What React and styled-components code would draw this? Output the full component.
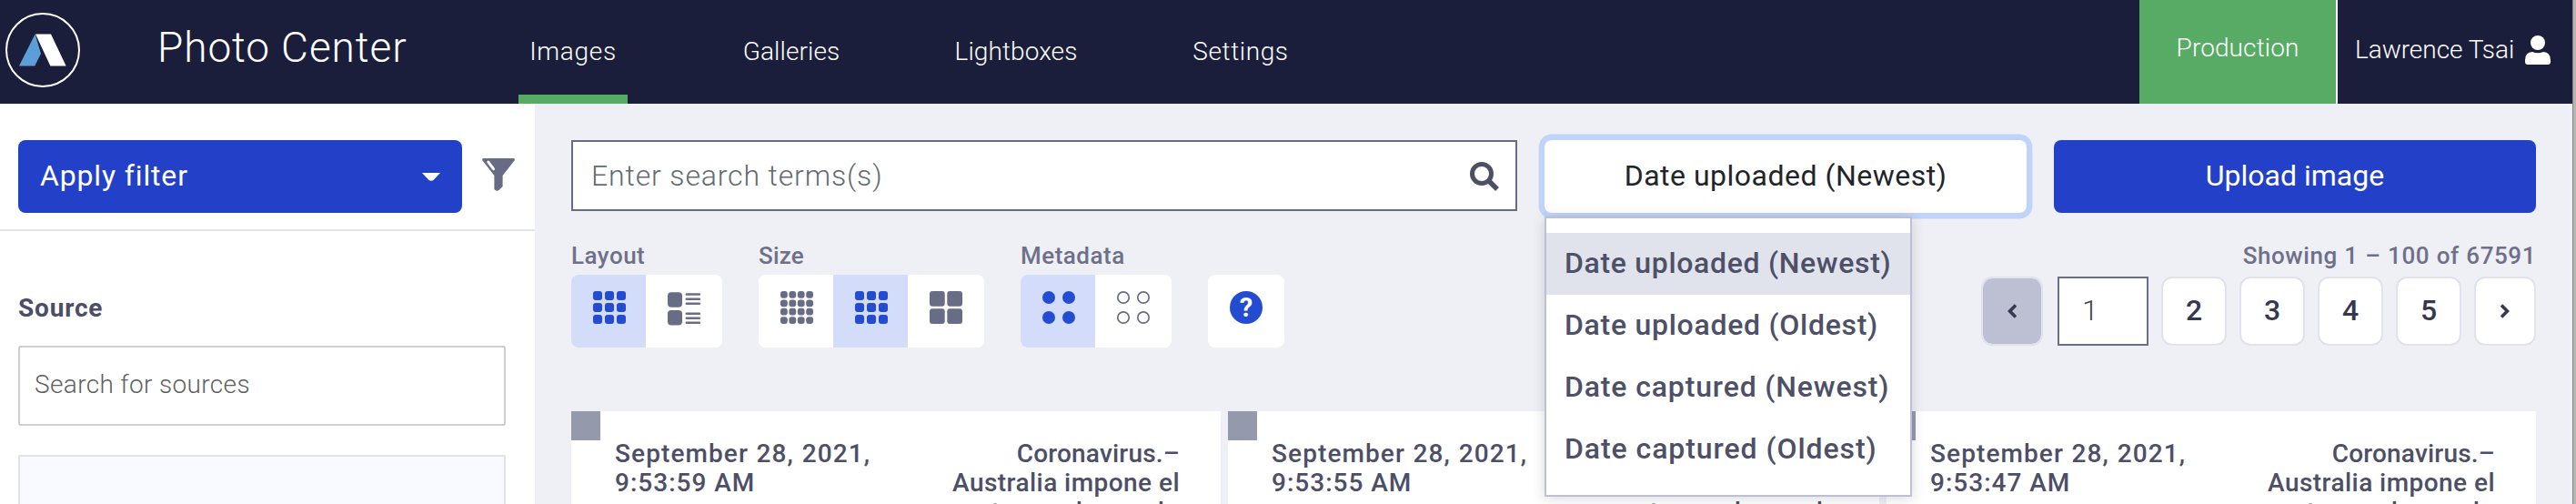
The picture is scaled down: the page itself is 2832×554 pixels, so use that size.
import React from "react";
import styled, { createGlobalStyle, css } from "styled-components";

const GlobalStyle = createGlobalStyle`
  *, *::before, *::after { box-sizing: border-box; }
  body { margin: 0; overflow: hidden; }
`;

const Page = styled.div`
  display: flex;
  width: 2832px;
  height: 554px;
  overflow: hidden;
  font-family: Roboto, "Liberation Sans", sans-serif;
  background: #eff0f5;
`;

const WindowEdge = styled.div`
  width: 4px;
  background: #b5b5b2;
  border-left: 1px solid #858585;
`;

const Shell = styled.div`
  width: 2828px;
  height: 554px;
  display: flex;
  flex-direction: column;
`;

const Spaced = styled.span`
  white-space: nowrap;
  letter-spacing: ${(p) => p.$ls || 0}px;
  word-spacing: ${(p) => p.$ws || 0}px;
`;

/* Header */
const Header = styled.header`
  flex: none;
  height: 114px;
  display: flex;
  background: #1b1e3b;
  color: #fff;
  font-size: 28px;
  font-weight: 300;
`;

const Logo = styled.svg`
  width: 82px;
  height: 82px;
  margin: 14px 0 0 6px;
`;

const Brand = styled.div`
  width: 482px;
  padding-left: 85px;
  font-size: 46px;
  font-weight: 340;
  line-height: 105px;
`;

const Nav = styled.nav`
  display: flex;
  gap: 114px;
  flex: 1;
`;

const NavItem = styled.a`
  width: ${(p) => p.$width}px;
  display: flex;
  justify-content: center;
  line-height: 114px;
  border-bottom: 10px solid ${(p) => (p.$active ? "#57ab65" : "transparent")};
`;

const Environment = styled.div`
  width: 218px;
  background: #57ab65;
  border-right: 2px solid #fff;
  text-align: center;
  line-height: 106px;
`;

const User = styled.div`
  width: 258px;
  display: flex;
  align-items: center;
  justify-content: space-between;
  padding: 0 24px 5px 19px;
`;

const UserIcon = styled.svg`
  width: 28px;
  height: 32px;
`;

/* Sidebar */
const Body = styled.div`
  display: flex;
  flex: 1;
  min-height: 0;
`;

const Sidebar = styled.aside`
  width: 588px;
  background: #fff;
  display: flex;
  flex-direction: column;
`;

const FilterBar = styled.div`
  flex: none;
  height: 140px;
  display: flex;
  padding: 40px 22px 0 20px;
  justify-content: space-between;
  border-bottom: 2px solid #e0e5ec;
`;

const buttonBase = css`
  height: 80px;
  border-radius: 8px;
  font-size: 32px;
  font-weight: 440;
  display: flex;
  align-items: center;
  padding-bottom: 2px;
`;

const ApplyFilter = styled.div`
  ${buttonBase}
  width: 488px;
  padding-left: 24px;
  padding-right: 24px;
  justify-content: space-between;
  background: #2240c8;
  color: #fff;
`;

const Caret = styled.svg`
  width: 20px;
  height: 9px;
  margin-top: 3px;
`;

const FunnelIcon = styled.svg`
  width: 36px;
  height: 36px;
  margin-top: 20px;
`;

const SourcePanel = styled.section`
  padding: 67px 32px 0 20px;
  display: flex;
  flex-direction: column;
`;

const SourceTitle = styled.div`
  font-size: 28px;
  line-height: 36px;
  font-weight: 700;
  color: #4b4e66;
`;

const SourceSearch = styled.div`
  height: 88px;
  margin-top: 23px;
  padding: 0 16px 4px;
  border: 2px solid #cfcfcf;
  border-radius: 2px;
  display: flex;
  align-items: center;
  font-size: 28px;
  font-weight: 320;
  color: #606060;
`;

const SourceList = styled.div`
  height: 120px;
  margin-top: 32px;
  border: 2px solid #e0e3ed;
  background: #f9faff;
`;

/* Main area */
const Main = styled.main`
  flex: 1;
  padding: 40px 40px 0;
  display: flex;
  flex-direction: column;
`;

const TopRow = styled.div`
  display: grid;
  grid-template-columns: 1040px 530px 530px;
  gap: 30px;
  height: 80px;
`;

const SearchField = styled.div`
  height: 78px;
  border: 2px solid #676b86;
  background: #fff;
  display: flex;
  align-items: center;
  justify-content: space-between;
  padding: 0 18px 0 20px;
  font-size: 32px;
  font-weight: 320;
  color: #626b70;
`;

const SearchIcon = styled.svg`
  width: 32px;
  height: 32px;
  margin-top: 1px;
`;

const SortWrap = styled.div`
  position: relative;
`;

const SortButton = styled.div`
  ${buttonBase}
  font-weight: 400;
  justify-content: center;
  background: #fff;
  color: #212529;
  box-shadow: 0 0 0 6.4px #bfd4f7;
`;

const SortMenu = styled.div`
  position: absolute;
  z-index: 2;
  top: 84px;
  left: 0;
  width: 404px;
  height: 308px;
  padding-top: 16px;
  border: 2px solid #bdbfd2;
  background: #fff;
  box-shadow: 0 2px 14px rgba(40, 42, 70, 0.18);
`;

const SortOption = styled.div`
  height: 68px;
  padding-left: 20px;
  line-height: 66px;
  font-size: 32px;
  font-weight: 460;
  color: #4e5068;
  background: ${(p) => (p.$selected ? "#e0e3ec" : "transparent")};
`;

const UploadButton = styled.div`
  ${buttonBase}
  justify-content: center;
  background: #2240c8;
  color: #fff;
`;

const ControlsRow = styled.div`
  display: flex;
  align-items: flex-end;
  gap: 40px;
  height: 118px;
  margin-top: 30px;
`;

const ControlGroup = styled.div`
  display: flex;
  flex-direction: column;
`;

const ControlLabel = styled.div`
  font-size: 26px;
  line-height: 34px;
  height: 38px;
  font-weight: 460;
  color: #6e708a;
`;

const Segments = styled.div`
  display: flex;
  height: 80px;
  padding-right: 2px;
  border-radius: 8px;
  overflow: hidden;
  background: #fff;
`;

const Segment = styled.div`
  width: 82px;
  height: 80px;
  padding: 18px 0 0 24px;
  background: ${(p) => (p.$on ? "#d3dcf8" : "#fff")};
  color: ${(p) => (p.$on ? "#234cd1" : "#686c85")};
`;

const Icon = styled.svg`
  display: block;
  width: 36px;
  height: 36px;
  fill: currentColor;
  overflow: visible;
`;

const HelpButton = styled.div`
  width: 84px;
  height: 80px;
  border-radius: 8px;
  background: #fff;
  padding: 18px 24px;
`;

const HelpBadge = styled.div`
  width: 36px;
  height: 36px;
  border-radius: 50%;
  background: #234cd1;
  color: #fff;
  font-size: 29px;
  font-weight: 700;
  line-height: 37px;
  text-align: center;
`;

const Paging = styled.div`
  margin-left: auto;
  height: 118px;
  display: flex;
  flex-direction: column;
  align-items: flex-end;
`;

const PageButtons = styled.div`
  display: flex;
  gap: 14px;
  margin-top: 2px;
`;

const PageButton = styled.div`
  width: ${(p) => p.$width || 72}px;
  height: 76px;
  border: 2px solid #e0e3ed;
  border-radius: 12px;
  margin-right: ${(p) => (p.$disabled ? 2 : 0)}px;
  background: ${(p) => (p.$disabled ? "#bdc0d2" : "#fff")};
  background-clip: padding-box;
  display: flex;
  align-items: center;
  justify-content: center;
  padding-bottom: 2px;
  font-size: 32px;
  font-weight: 480;
  color: #36384f;
`;

const PageInput = styled.div`
  width: 100px;
  height: 76px;
  border: 2px solid #6b6e89;
  background: #fff;
  padding-left: 25px;
  font-size: 32px;
  font-weight: 320;
  line-height: 70px;
  color: #40454b;
`;

const Chevron = styled.svg`
  width: 10px;
  height: 16px;
  margin-top: 2px;
  fill: none;
  stroke: #36384f;
  stroke-width: 3.6;
`;

const Cards = styled.div`
  display: grid;
  grid-template-columns: 714px 716px 714px;
  gap: 8px;
  margin-top: 70px;
  height: 102px;
`;

const Card = styled.article`
  background: #fff;
  display: flex;
  height: 102px;
  overflow: hidden;
`;

const CardCheck = styled.div`
  width: 32px;
  height: 32px;
  background: #9599ac;
`;

const CardText = styled.div`
  flex: 1;
  display: flex;
  justify-content: space-between;
  padding: 31px 45px 0 16px;
  font-size: 28px;
  line-height: 32px;
  font-weight: 460;
  color: #4d4f67;
`;

const Column = styled.div`
  display: flex;
  flex-direction: column;
  align-items: ${(p) => (p.$end ? "flex-end" : "flex-start")};
`;

const GridIcon = ({ n, size, gap, r }) => {
  const cells = [];
  for (let y = 0; y < n; y++)
    for (let x = 0; x < n; x++)
      cells.push(
        <rect key={`${x}-${y}`} x={x * (size + gap)} y={y * (size + gap)} width={size} height={size} rx={r} />
      );
  return <Icon viewBox="0 0 36 36">{cells}</Icon>;
};

const ListIcon = () => (
  <Icon viewBox="0 0 36 36">
    <rect x="0" y="1.3" width="16" height="16.4" rx="4" />
    <rect x="0" y="21" width="16" height="16.4" rx="4" />
    {[2.2, 7.4, 12.4, 23.4, 28.4, 33.4].map((y) => (
      <rect key={y} x="19.6" y={y} width="16.4" height="2.6" rx="1" />
    ))}
  </Icon>
);

const DotsIcon = ({ outline }) => (
  <Icon viewBox="0 0 36 36">
    {[[7, 7], [29, 7], [7, 29], [29, 29]].map(([x, y]) =>
      outline ? (
        <circle key={`${x}${y}`} cx={x} cy={y} r="6.2" fill="none" stroke="currentColor" strokeWidth="1.7" />
      ) : (
        <circle key={`${x}${y}`} cx={x} cy={y} r="7" />
      )
    )}
  </Icon>
);

const times = ["9:53:59 AM", "9:53:55 AM", "9:53:47 AM"];

const sortOptions = [
  ["Date uploaded (Newest)", 0.68],
  ["Date uploaded (Oldest)", 0.72],
  ["Date captured (Newest)", 0.85],
  ["Date captured (Oldest)", 0.93],
];

export default function App() {
  return (
    <Page>
      <GlobalStyle />
      <Shell>
        <Header>
          <Logo viewBox="0 0 82 82">
            <circle cx="41" cy="41" r="40" fill="none" stroke="#fff" strokeWidth="2" />
            <path d="M32.6 23.5L39 45L32.2 58.5H15z" fill="#5c9fd8" />
            <path d="M33 23.5H50L66.6 58.5H49.4z" fill="#fff" />
          </Logo>
          <Brand><Spaced $ls={0.9}>Photo Center</Spaced></Brand>
          <Nav>
            <NavItem $active $width={120}><Spaced $ls={0.7}>Images</Spaced></NavItem>
            <NavItem $width={132}><Spaced $ls={0.1}>Galleries</Spaced></NavItem>
            <NavItem $width={134}><Spaced $ls={0.1}>Lightboxes</Spaced></NavItem>
            <NavItem $width={132}><Spaced $ls={0.6}>Settings</Spaced></NavItem>
          </Nav>
          <Environment><Spaced $ls={0.1}>Production</Spaced></Environment>
          <User>
            <Spaced $ls={-0.05}>Lawrence Tsai</Spaced>
            <UserIcon viewBox="0 0 28 32" fill="#fff">
              <circle cx="14" cy="8" r="8" />
              <path d="M8 18Q14 20.5 20 18Q28 18.500 28 27V29Q28 32 25 32H3Q0 32 0 29V27Q0 18.500 8 18Z" />
            </UserIcon>
          </User>
        </Header>
        <Body>
          <Sidebar>
            <FilterBar>
              <ApplyFilter>
                <Spaced $ls={0.85}>Apply filter</Spaced>
                <Caret viewBox="0 0 20 9"><path d="M0 0H20L12.500 8Q10 9.500 7.500 8Z" fill="#fff" /></Caret>
              </ApplyFilter>
              <FunnelIcon viewBox="0 0 36 36">
                <path d="M1 0H35Q36.500 1 35.500 2.500L22.600 19V31L18.500 35Q16 37 13.400 34V19L.5 2.500Q-.5 1 1 0Z" fill="#676b86" />
                <path d="M6.800 4.200L12.500 11.700" stroke="#fff" strokeWidth="3" strokeLinecap="round" />
              </FunnelIcon>
            </FilterBar>
            <SourcePanel>
              <SourceTitle><Spaced $ls={0.8}>Source</Spaced></SourceTitle>
              <SourceSearch><Spaced $ls={0.35}>Search for sources</Spaced></SourceSearch>
              <SourceList />
            </SourcePanel>
          </Sidebar>
          <Main>
            <TopRow>
              <SearchField>
                <Spaced $ls={0.85}>Enter search terms(s)</Spaced>
                <SearchIcon viewBox="0 0 32 32" fill="none" stroke="#4d4f67">
                  <circle cx="13" cy="13" r="10.500" strokeWidth="5" />
                  <path d="M21 21L30 30" strokeWidth="5.500" />
                </SearchIcon>
              </SearchField>
              <SortWrap>
                <SortButton><Spaced $ls={0.5}>Date uploaded (Newest)</Spaced></SortButton>
                <SortMenu>
                  {sortOptions.map(([label, ls], i) => (
                    <SortOption key={label} $selected={i === 0}><Spaced $ls={ls}>{label}</Spaced></SortOption>
                  ))}
                </SortMenu>
              </SortWrap>
              <UploadButton><Spaced $ls={0}>Upload image</Spaced></UploadButton>
            </TopRow>
            <ControlsRow>
              <ControlGroup>
                <ControlLabel><Spaced $ls={0.5}>Layout</Spaced></ControlLabel>
                <Segments>
                  <Segment $on><GridIcon n={3} size={10} gap={3} r={3} /></Segment>
                  <Segment><ListIcon /></Segment>
                </Segments>
              </ControlGroup>
              <ControlGroup>
                <ControlLabel><Spaced $ls={0.2}>Size</Spaced></ControlLabel>
                <Segments>
                  <Segment><GridIcon n={4} size={7.8} gap={1.6} r={3} /></Segment>
                  <Segment $on><GridIcon n={3} size={10} gap={3} r={3} /></Segment>
                  <Segment><GridIcon n={2} size={16.7} gap={2.6} r={3} /></Segment>
                </Segments>
              </ControlGroup>
              <ControlGroup>
                <ControlLabel><Spaced $ls={0.5}>Metadata</Spaced></ControlLabel>
                <Segments>
                  <Segment $on><DotsIcon /></Segment>
                  <Segment><DotsIcon outline /></Segment>
                </Segments>
              </ControlGroup>
              <HelpButton><HelpBadge>?</HelpBadge></HelpButton>
              <Paging>
                <ControlLabel><Spaced $ls={0.55} $ws={0.6}>Showing 1 – 100 of 67591</Spaced></ControlLabel>
                <PageButtons>
                  <PageButton $disabled $width={68}>
                    <Chevron viewBox="0 0 10 16"><path d="M9 1.500L2.500 8L9 14.500" /></Chevron>
                  </PageButton>
                  <PageInput>1</PageInput>
                  {[2, 3, 4, 5].map((n) => <PageButton key={n}>{n}</PageButton>)}
                  <PageButton $width={68}>
                    <Chevron viewBox="0 0 10 16"><path d="M1 1.500L7.500 8L1 14.500" /></Chevron>
                  </PageButton>
                </PageButtons>
              </Paging>
            </ControlsRow>
            <Cards>
              {times.map((time) => (
                <Card key={time}>
                  <CardCheck />
                  <CardText>
                    <Column>
                      <Spaced $ls={1.1} $ws={0.6}>September 28, 2021,</Spaced>
                      <Spaced $ls={1}>{time}</Spaced>
                    </Column>
                    <Column $end>
                      <Spaced $ls={0.2}>Coronavirus.–</Spaced>
                      <Spaced $ls={0.45}>Australia impone el</Spaced>
                      <Spaced $ls={1}>toque de queda</Spaced>
                    </Column>
                  </CardText>
                </Card>
              ))}
            </Cards>
          </Main>
        </Body>
      </Shell>
      <WindowEdge />
    </Page>
  );
}
